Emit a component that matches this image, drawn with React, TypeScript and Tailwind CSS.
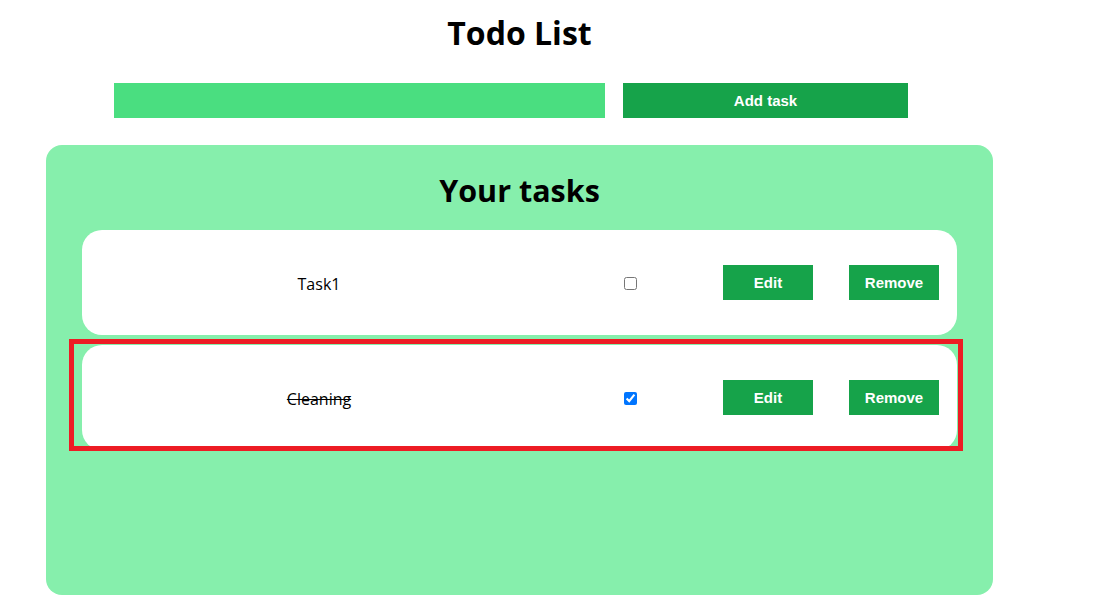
import { useState } from 'react';

interface Task {
  id: number;
  title: string;
  done: boolean;
}

const initialTasks: Task[] = [
  { id: 1, title: 'Task1', done: false },
  { id: 2, title: 'Cleaning', done: true },
];

function TaskRow({ task, highlighted, onToggle }: { task: Task; highlighted?: boolean; onToggle: () => void }) {
  return (
    <div className="relative flex items-center w-[875px] h-[105px] bg-white rounded-[20px]">
      <div
        className={`w-[474px] pt-[2px] text-center text-base text-black font-['Open_Sans',sans-serif] ${
          task.done ? 'line-through' : ''
        }`}
      >
        {task.title}
      </div>
      <input
        type="checkbox"
        checked={task.done}
        onChange={onToggle}
        className="ml-[68px] mt-[1px] w-[13px] h-[13px]"
      />
      <button className="ml-[86px] w-[90px] h-[35px] pt-[2px] bg-[#16a34a] text-white text-[15px] font-bold font-['Liberation_Sans',Arial,sans-serif]">
        Edit
      </button>
      <button className="ml-[36px] w-[90px] h-[35px] pt-[2px] bg-[#16a34a] text-white text-[15px] font-bold font-['Liberation_Sans',Arial,sans-serif]">
        Remove
      </button>

      {/* annotation frame drawn over the row */}
      {highlighted && (
        <div className="absolute -left-[13px] -top-[6px] w-[894px] h-[112px] border-[5px] border-[#ed1c24] pointer-events-none"></div>
      )}
    </div>
  );
}

export default function App() {
  const [tasks, setTasks] = useState<Task[]>(initialTasks);
  const [text, setText] = useState('');

  const toggle = (id: number) =>
    setTasks(prev => prev.map(t => (t.id === id ? { ...t, done: !t.done } : t)));

  return (
    <div className="w-[1094px] h-[602px] bg-white overflow-hidden font-['Open_Sans',sans-serif]">
      <div className="ml-[46px] w-[947px]">
        <h1 className="mt-[13px] text-center text-[32px] leading-[40px] font-bold text-black">Todo List</h1>

        {/* New task input */}
        <div className="flex mt-[30px] ml-[68px]">
          <input
            value={text}
            onChange={e => setText(e.target.value)}
            className="w-[491px] h-[35px] bg-[#4ade80] outline-none px-2"
          />
          <button className="ml-[18px] w-[285px] h-[35px] pt-[2px] bg-[#16a34a] text-white text-[15px] font-bold font-['Liberation_Sans',Arial,sans-serif]">
            Add task
          </button>
        </div>

        {/* Tasks panel */}
        <div className="mt-[27px] h-[450px] bg-[#86efac] rounded-2xl pt-[25px]">
          <h2 className="text-center text-[30.5px] leading-[40px] font-bold text-black">Your tasks</h2>
          <div className="flex flex-col gap-[10px] mt-[20px] ml-[36px]">
            {tasks.map(task => (
              <TaskRow key={task.id} task={task} highlighted={task.id === 2} onToggle={() => toggle(task.id)} />
            ))}
          </div>
        </div>
      </div>
    </div>
  );
}
